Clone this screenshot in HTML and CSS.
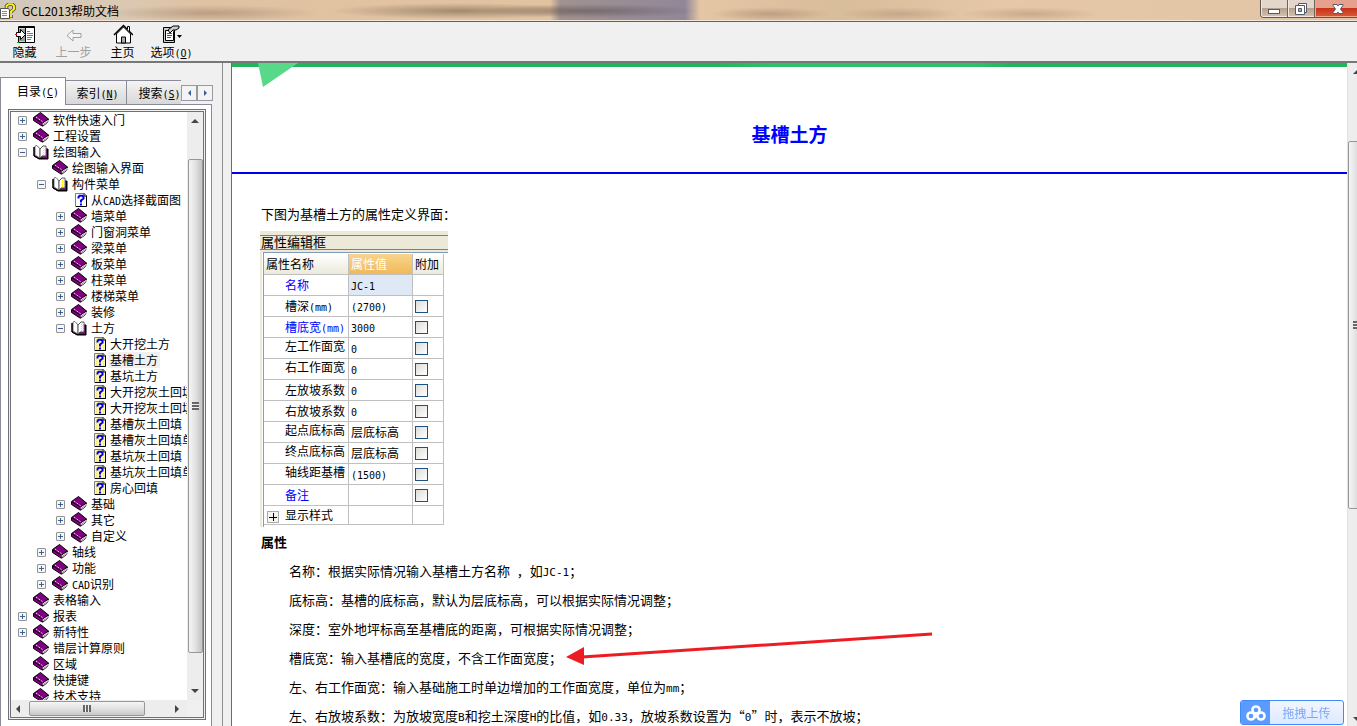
FILE: index.html
```html
<!DOCTYPE html>
<html lang="zh-CN">
<head>
<meta charset="utf-8">
<title>GCL2013帮助文档</title>
<link rel="stylesheet" href="styles.css">
</head>
<body>
<svg class="defs" aria-hidden="true">
  <symbol id="book" viewBox="0 0 16 16">
    <path d="M.500 5.500L7.500 .500l8 6.500-1 2 .5 1-5 4H9L.500 8.500z" fill="#800080" stroke="#000"/>
    <path d="M9.500 11l5.500-3.500-.500 2 .5.500-5 3.500z" fill="#fff"/>
    <path d="M10 12.500l4.500-3" stroke="#999"/>
    <path d="M1 6l8.500 5 6-4" fill="none" stroke="#000"/>
    <path d="M3 5l7 5" stroke="#fff" stroke-dasharray="1 1" fill="none"/>
  </symbol>
  <symbol id="open" viewBox="0 0 16 16">
    <path d="M1 3v9l5 3h9V5h-2" fill="#800080" stroke="#000"/>
    <path d="M2 2v9l5 3V5L4 1.500z" fill="#fff" stroke="#777"/>
    <path d="M7 14V5l3-3h3v10H9z" fill="#fff" stroke="#555"/>
    <path d="M10.500 4v8M12 3v8" stroke="#ffe600" stroke-dasharray="1 1"/>
    <path d="M1 3v9l5 2.500h8.500V5" fill="none" stroke="#000"/>
  </symbol>
  <symbol id="topic" viewBox="-2 0 16 16">
    <path d="M2.500 1.500h9l2 2v11h-11z" fill="#fff8a0" stroke="#808080"/>
    <path d="M4.500 3v11M11.500 5v9" stroke="#ffe600" stroke-dasharray="1 1"/>
    <path d="M13.500 4v10.500H3M11 1.500V4h3" fill="none" stroke="#000"/>
    <path d="M5.500 6.500V5l1-1.200h3L10.500 5v1.500L8 8.500v2M8 11.500v2" fill="none" stroke="#0000e8" stroke-width="2"/>
  </symbol>
  <symbol id="topic-plain" viewBox="-2 0 16 16">
    <path d="M2.500 1.500h9l2 2v11h-11z" fill="#fff" stroke="#808080"/>
    <path d="M13.500 4v10.500H3M11 1.500V4h3" fill="none" stroke="#000"/>
    <path d="M5.500 6.500V5l1-1.200h3L10.500 5v1.500L8 8.500v2M8 11.500v2" fill="none" stroke="#0000e8" stroke-width="2"/>
  </symbol>
</svg>

<header class="titlebar">
  <svg class="app-icon" viewBox="0 0 16 16" aria-hidden="true">
    <path d="M.5 5.500h8l1 2v8h-9z" fill="#fff" stroke="#555"/>
    <path d="M2 8.500h5M2 10.500h5M2 12.500h5" stroke="#888"/>
    <path d="M6.500 5V3l2-1.700h4L14 3v3l-3 2.500V10M11 12v3" fill="none" stroke="#333" stroke-width="3.400"/>
    <path d="M6.500 5V3l2-1.700h4L14 3v3l-3 2.500V10M11 12v2.600" fill="none" stroke="#fff200" stroke-width="2"/>
  </svg>
  <h1 class="app-title">GCL2013帮助文档</h1>
  <div class="window-buttons">
    <button class="win" aria-label="最小化"><svg viewBox="0 0 14 14"><rect x="1.500" y="7.500" width="11" height="4" fill="#fff" stroke="#555a6b"/></svg></button>
    <button class="win" aria-label="还原"><svg viewBox="0 0 14 14"><path d="M4.500 1.500h8v9h-8z" fill="#fff" stroke="#555a6b"/><path d="M1.500 3.500h9v9h-9z" fill="#fff" stroke="#555a6b"/><path d="M4.500 6.500h3v3h-3z" fill="#b8a898" stroke="#555a6b"/></svg></button>
    <button class="win close" aria-label="关闭"><svg viewBox="0 0 14 14"><path d="M2 2.500h4l1 1.500 1-1.500h4v1L9.500 7l2.500 3.500v1H8L7 10l-1 1.500H2v-1L4.500 7 2 3.500z" fill="#fff" stroke="#555a6b"/></svg></button>
  </div>
</header>

<nav class="toolbar" aria-label="工具栏">
  <button class="tool"><svg viewBox="0 0 20 20"><path d="M3.500 2.500h16v16h-16z" fill="#fff" stroke="#000"/><path d="M4 3.500h15" stroke="#000"/><path d="M4 4.500h6v13H4z" fill="#999"/><path d="M10.500 4v14" stroke="#000"/><path d="M12 7.500h3M12 9.500h6M12 11.500h6M12 13.500h5M12 15.500h4" stroke="#777"/><path d="M1.500 8.500h4v-3l5 5-5 5v-3h-4z" fill="#fff" stroke="#000"/><path d="M0 10.500h2" stroke="#f00"/><path d="M2 18.500h2" stroke="#0b0"/></svg><span>隐藏</span></button>
  <button class="tool" disabled><svg viewBox="0 0 20 20"><path d="M3 11.500l6-5.500v3.500h8v4H9V17z" fill="#f4f4f4" stroke="#a0a0a0"/></svg><span>上一步</span></button>
  <button class="tool"><svg viewBox="0 0 20 20"><path d="M3.500 10v9h14v-9l-7-7z" fill="#fff" stroke="#000"/><path d="M1 11l9.500-9.500L20 11" fill="none" stroke="#000" stroke-width="1.500"/><path d="M14.500 5V2.500h2V8" fill="#fff" stroke="#000"/><path d="M8.500 19v-6h4v6z" fill="#aaa" stroke="#000"/></svg><span>主页</span></button>
  <button class="tool"><svg viewBox="0 0 20 20"><path d="M1.500 3.500h11v15h-11z" fill="#ccc" stroke="#000"/><path d="M3.500 6.500h7l1 1v9h-8z" fill="#fff" stroke="#000"/><path d="M5 9.500h5M5 11.500h5M5 13.500h4" stroke="#555"/><path d="M6 6l5-4h6v2l-3 2h-3l-3 3z" fill="#ccc" stroke="#000"/><path d="M15 11h5l-2.500 3z" fill="#000"/></svg><span>选项<span class="lat">(<u>O</u>)</span></span></button>
</nav>

<div class="workspace">
  <aside class="sidebar">
    <div class="tabs" role="tablist">
      <button class="tab active" role="tab" aria-selected="true">目录<span class="lat">(<u>C</u>)</span></button>
      <button class="tab" role="tab">索引<span class="lat">(<u>N</u>)</span></button>
      <button class="tab last" role="tab">搜索<span class="lat">(<u>S</u>)</span></button>
      <button class="tab-nav" aria-label="向左"><i class="tri left"></i></button>
      <button class="tab-nav" aria-label="向右"><i class="tri right"></i></button>
    </div>
    <div class="panel">
      <div class="tree-frame">
        <ul class="tree">
          <li><div class="row"><button class="exp plus" aria-label="展开"></button><svg><use href="#book"/></svg><a href="#">软件快速入门</a></div></li>
          <li><div class="row"><button class="exp plus" aria-label="展开"></button><svg><use href="#book"/></svg><a href="#">工程设置</a></div></li>
          <li><div class="row"><button class="exp" aria-label="折叠"></button><svg><use href="#open"/></svg><a href="#">绘图输入</a></div>
            <ul>
              <li><div class="row"><i class="gap"></i><svg><use href="#book"/></svg><a href="#">绘图输入界面</a></div></li>
              <li><div class="row"><button class="exp" aria-label="折叠"></button><svg><use href="#open"/></svg><a href="#">构件菜单</a></div>
                <ul>
                  <li><div class="row"><i class="gap"></i><svg><use href="#topic-plain"/></svg><a href="#">从<span class="lat">CAD</span>选择截面图</a></div></li>
                  <li><div class="row"><button class="exp plus" aria-label="展开"></button><svg><use href="#book"/></svg><a href="#">墙菜单</a></div></li>
                  <li><div class="row"><button class="exp plus" aria-label="展开"></button><svg><use href="#book"/></svg><a href="#">门窗洞菜单</a></div></li>
                  <li><div class="row"><button class="exp plus" aria-label="展开"></button><svg><use href="#book"/></svg><a href="#">梁菜单</a></div></li>
                  <li><div class="row"><button class="exp plus" aria-label="展开"></button><svg><use href="#book"/></svg><a href="#">板菜单</a></div></li>
                  <li><div class="row"><button class="exp plus" aria-label="展开"></button><svg><use href="#book"/></svg><a href="#">柱菜单</a></div></li>
                  <li><div class="row"><button class="exp plus" aria-label="展开"></button><svg><use href="#book"/></svg><a href="#">楼梯菜单</a></div></li>
                  <li><div class="row"><button class="exp plus" aria-label="展开"></button><svg><use href="#book"/></svg><a href="#">装修</a></div></li>
                  <li><div class="row"><button class="exp" aria-label="折叠"></button><svg><use href="#open"/></svg><a href="#">土方</a></div>
                    <ul>
                      <li><div class="row"><i class="gap"></i><svg><use href="#topic"/></svg><a href="#">大开挖土方</a></div></li>
                      <li><div class="row"><i class="gap"></i><svg><use href="#topic"/></svg><a href="#" class="selected">基槽土方</a></div></li>
                      <li><div class="row"><i class="gap"></i><svg><use href="#topic"/></svg><a href="#">基坑土方</a></div></li>
                      <li><div class="row"><i class="gap"></i><svg><use href="#topic"/></svg><a href="#">大开挖灰土回填</a></div></li>
                      <li><div class="row"><i class="gap"></i><svg><use href="#topic"/></svg><a href="#">大开挖灰土回填单元</a></div></li>
                      <li><div class="row"><i class="gap"></i><svg><use href="#topic"/></svg><a href="#">基槽灰土回填</a></div></li>
                      <li><div class="row"><i class="gap"></i><svg><use href="#topic"/></svg><a href="#">基槽灰土回填单元</a></div></li>
                      <li><div class="row"><i class="gap"></i><svg><use href="#topic"/></svg><a href="#">基坑灰土回填</a></div></li>
                      <li><div class="row"><i class="gap"></i><svg><use href="#topic"/></svg><a href="#">基坑灰土回填单元</a></div></li>
                      <li><div class="row"><i class="gap"></i><svg><use href="#topic"/></svg><a href="#">房心回填</a></div></li>
                    </ul>
                  </li>
                  <li><div class="row"><button class="exp plus" aria-label="展开"></button><svg><use href="#book"/></svg><a href="#">基础</a></div></li>
                  <li><div class="row"><button class="exp plus" aria-label="展开"></button><svg><use href="#book"/></svg><a href="#">其它</a></div></li>
                  <li><div class="row"><button class="exp plus" aria-label="展开"></button><svg><use href="#book"/></svg><a href="#">自定义</a></div></li>
                </ul>
              </li>
              <li><div class="row"><button class="exp plus" aria-label="展开"></button><svg><use href="#book"/></svg><a href="#">轴线</a></div></li>
              <li><div class="row"><button class="exp plus" aria-label="展开"></button><svg><use href="#book"/></svg><a href="#">功能</a></div></li>
              <li><div class="row"><button class="exp plus" aria-label="展开"></button><svg><use href="#book"/></svg><a href="#"><span class="lat">CAD</span>识别</a></div></li>
            </ul>
          </li>
          <li><div class="row"><i class="gap"></i><svg><use href="#book"/></svg><a href="#">表格输入</a></div></li>
          <li><div class="row"><button class="exp plus" aria-label="展开"></button><svg><use href="#book"/></svg><a href="#">报表</a></div></li>
          <li><div class="row"><button class="exp plus" aria-label="展开"></button><svg><use href="#book"/></svg><a href="#">新特性</a></div></li>
          <li><div class="row"><i class="gap"></i><svg><use href="#book"/></svg><a href="#">错层计算原则</a></div></li>
          <li><div class="row"><i class="gap"></i><svg><use href="#book"/></svg><a href="#">区域</a></div></li>
          <li><div class="row"><i class="gap"></i><svg><use href="#book"/></svg><a href="#">快捷键</a></div></li>
          <li><div class="row"><i class="gap"></i><svg><use href="#book"/></svg><a href="#">技术支持</a></div></li>
        </ul>
        <div class="vbar"><i class="tri up"></i><div class="vthumb"><i class="grip"></i></div><i class="tri down"></i></div>
        <div class="hbar"><i class="tri left"></i><div class="hthumb"><i class="grip"></i></div><i class="tri right"></i></div>
      </div>
    </div>
  </aside>

  <main class="page">
    <article class="content">
      <div class="banner"><svg viewBox="0 0 40 24" aria-hidden="true"><path d="M0 0h40L5 24z" fill="#57d989"/></svg></div>
      <h2 class="heading">基槽土方</h2>
      <div class="body">
        <p class="intro">下图为基槽土方的属性定义界面：</p>
        <div class="editor">
          <div class="editor-title">属性编辑框</div>
          <div class="editor-body">
          <table class="props">
            <thead><tr><th class="c-name">属性名称</th><th class="c-value">属性值</th><th class="c-add">附加</th></tr></thead>
            <tbody>
              <tr><td class="blue">名称</td><td class="current"><span class="lat">JC-1</span></td><td></td></tr>
              <tr><td>槽深<span class="lat">(mm)</span></td><td><span class="lat">(2700)</span></td><td><input type="checkbox" aria-label="附加槽深"></td></tr>
              <tr><td class="blue">槽底宽<span class="lat">(mm)</span></td><td><span class="lat">3000</span></td><td><input type="checkbox" aria-label="附加槽底宽"></td></tr>
              <tr><td class="high">左工作面宽</td><td><span class="lat">0</span></td><td><input type="checkbox" aria-label="附加左工作面宽"></td></tr>
              <tr><td class="high">右工作面宽</td><td><span class="lat">0</span></td><td><input type="checkbox" aria-label="附加右工作面宽"></td></tr>
              <tr><td>左放坡系数</td><td><span class="lat">0</span></td><td><input type="checkbox" aria-label="附加左放坡系数"></td></tr>
              <tr><td>右放坡系数</td><td><span class="lat">0</span></td><td><input type="checkbox" aria-label="附加右放坡系数"></td></tr>
              <tr><td class="high">起点底标高</td><td>层底标高</td><td><input type="checkbox" aria-label="附加起点底标高"></td></tr>
              <tr><td class="high">终点底标高</td><td>层底标高</td><td><input type="checkbox" aria-label="附加终点底标高"></td></tr>
              <tr><td class="high">轴线距基槽</td><td><span class="lat">(1500)</span></td><td><input type="checkbox" aria-label="附加轴线距基槽"></td></tr>
              <tr><td class="blue">备注</td><td></td><td><input type="checkbox" aria-label="附加备注"></td></tr>
              <tr class="short"><td class="group"><button class="more" aria-label="展开显示样式"></button>显示样式</td><td></td><td></td></tr>
            </tbody>
          </table>
          </div>
        </div>
        <h3 class="sub">属性</h3>
        <div class="notes">
          <p>名称：根据实际情况输入基槽土方名称<span class="lat"> </span>，如<span class="lat">JC-1</span>；</p>
          <p>底标高：基槽的底标高，默认为层底标高，可以根据实际情况调整；</p>
          <p>深度：室外地坪标高至基槽底的距离，可根据实际情况调整；</p>
          <p class="pointed">槽底宽：输入基槽底的宽度，不含工作面宽度；<svg class="arrow" viewBox="0 0 368 34" aria-hidden="true"><path d="M16 25L366 2" stroke="#ed1c24" stroke-width="3"/><path d="M0 25l18-10v18z" fill="#ed1c24"/></svg></p>
          <p>左、右工作面宽：输入基础施工时单边增加的工作面宽度，单位为<span class="lat">mm</span>；</p>
          <p>左、右放坡系数：为放坡宽度<span class="lat">B</span>和挖土深度<span class="lat">H</span>的比值，如<span class="lat">0.33</span>，放坡系数设置为“<span class="lat">0</span>”时，表示不放坡；</p>
        </div>
      </div>
    </article>
    <div class="pagebar"><i class="tri up"></i><div class="vthumb"><i class="grip"></i></div><i class="tri down"></i></div>
  </main>
</div>

<button class="upload"><span class="upload-logo"><svg viewBox="0 0 20 16" aria-hidden="true"><g fill="none" stroke="#fff" stroke-width="2.500"><circle cx="10" cy="5" r="3.600"/><circle cx="5" cy="11" r="3.600"/><circle cx="15" cy="11" r="3.600"/><path d="M8 13l5-5"/></g></svg></span><span class="upload-text">拖拽上传</span></button>
</body>
</html>
```

FILE: styles.css
```css
* { box-sizing: border-box; }

body {
  margin: 0;
  height: 100vh;
  display: flex;
  flex-direction: column;
  overflow: hidden;
  background: #f0f0f0;
  color: #000;
  font: 12px/16px "Noto Sans CJK SC", sans-serif;
}

button {
  margin: 0;
  padding: 0;
  border: 0;
  background: none;
  color: inherit;
  font: inherit;
}

ul { margin: 0; padding: 0; list-style: none; }
a { color: inherit; text-decoration: none; }
.defs { display: none; }
.lat { font-family: "DejaVu Sans Mono", monospace; font-size: 10px; line-height: 1px; }
.notes .lat { font-size: 11px; }

/* Title bar */
.titlebar {
  flex: none;
  height: 22px;
  display: flex;
  align-items: center;
  gap: 6px;
  border-bottom: 1px solid #6d5c52;
  box-shadow: inset 0 -1px #f3e6da;
  background:
    radial-gradient(ellipse 110px 8px at 210px 13px, #9a806a88, transparent),
    radial-gradient(ellipse 130px 8px at 460px 11px, #5c463677, transparent),
    radial-gradient(ellipse 110px 7px at 590px 11px, #4d404677, transparent),
    radial-gradient(ellipse 60px 7px at 770px 14px, #a0806688, transparent),
    radial-gradient(ellipse 60px 7px at 900px 14px, #a0806666, transparent),
    radial-gradient(ellipse 70px 7px at 1030px 14px, #a0806666, transparent),
    linear-gradient(90deg, #cfc8bd 0, #dbc9b4 120px, #dfc2a2 200px, #e2c3a1 550px, #a09290 560px, #918799 685px, #e4c6a5 700px, #d8bd9b 840px, #e5c8a7 1000px, #e2c5a5);
}
.app-icon { flex: none; width: 16px; height: 16px; }
.app-title { flex: 1; margin: 0; font-size: 12px; font-weight: 400; }
.window-buttons {
  align-self: flex-start;
  display: flex;
  height: 18px;
  border: solid #5f5650;
  border-width: 0 0 1px 1px;
  border-radius: 0 0 0 4px;
  overflow: hidden;
}
.win {
  width: 27px;
  border-right: 1px solid #6f635b;
  background: linear-gradient(#e3d6ca 0 45%, #b5a08e 50%, #d4c4b4);
  box-shadow: inset 1px -1px #f2e9e0;
}
.win svg { display: block; width: 14px; height: 14px; margin: 0 auto; }
.close {
  width: 42px;
  padding-left: 4px;
  border: 0;
  background: linear-gradient(#e5a18d 0 45%, #c6351b 50%, #dd5a36);
  box-shadow: inset 1px -1px #f0a58c;
}

/* Toolbar */
.toolbar {
  flex: none;
  display: flex;
  height: 41px;
  padding-top: 2px;
  border-bottom: 2px solid #777;
}
.tool {
  width: 49px;
  display: flex;
  flex-direction: column;
  align-items: center;
  white-space: nowrap;
}
.tool svg { width: 20px; height: 20px; }
.tool:disabled { color: #a0a0a0; }

/* Split workspace */
.workspace { flex: 1; min-height: 0; display: flex; }
.sidebar {
  flex: none;
  width: 223px;
  display: flex;
  flex-direction: column;
  padding: 14px 10px 0 0;
  border-right: 1px solid #909090;
}
.tabs { flex: none; display: flex; align-items: flex-end; height: 27px; }
.tab {
  flex: none;
  height: 24px;
  width: 61px;
  padding-left: 3px;
  border: solid #8a8a98;
  border-width: 1px 1px 0 0;
  background: linear-gradient(#f4f4f4, #d8d8d8);
  white-space: nowrap;
}
.active {
  position: relative;
  z-index: 1;
  width: 66px;
  height: 28px;
  margin-bottom: -1px;
  padding: 0 0 2px 10px;
  border-left-width: 1px;
  background: #fff;
}
.last { width: 54px; padding-left: 11px; border-right: 0; overflow: hidden; }
.tab-nav {
  flex: none;
  width: 16px;
  height: 16px;
  margin-bottom: 3px;
  border: 1px solid #9a9aa4;
  background: #f3f3f3;
  display: grid;
  place-items: center;
  color: #3b5c9a;
}
.panel {
  flex: 1;
  min-height: 0;
  padding: 4px 5px 6px 7px;
  border: solid #8a8a98;
  border-width: 1px 1px 0 1px;
  background: #fff;
}
.tree-frame {
  height: 100%;
  display: grid;
  grid-template: minmax(0, 1fr) 17px / minmax(0, 1fr) 16px;
  border: 3px double #707078;
  background: #f0f0f0;
}
.tree { overflow: hidden; background: #fff; }
.tree ul { padding-left: 19px; }
.row { display: flex; align-items: center; height: 16px; padding-left: 7px; white-space: nowrap; }
.row svg { flex: none; width: 16px; height: 16px; margin: 0 2px 0 6px; }
.row a { padding: 0 2px; }
.selected { background: #f0f0f0; }
.gap { flex: none; width: 9px; }
.exp {
  flex: none;
  width: 9px;
  height: 9px;
  border: 1px solid #919191;
  border-radius: 1px;
  background: linear-gradient(#3a5f9e, #3a5f9e) center / 5px 1px no-repeat, #f6f6f6;
}
.plus {
  background:
    linear-gradient(#3a5f9e, #3a5f9e) center / 5px 1px no-repeat,
    linear-gradient(#3a5f9e, #3a5f9e) center / 1px 5px no-repeat, #f6f6f6;
}

/* Scroll bars */
.tri { flex: none; width: 0; height: 0; border: 4px solid transparent; }
.tri.up { border-width: 0 4px 4px; border-bottom-color: #444; }
.tri.down { border-width: 4px 4px 0; border-top-color: #444; }
.tri.left { border-width: 4px 4px 4px 0; border-right-color: #444; }
.tri.right { border-width: 4px 0 4px 4px; border-left-color: #444; }
.tab-nav .left { border-width: 3px 3px 3px 0; border-right-color: #3b5c9a; }
.tab-nav .right { border-width: 3px 0 3px 3px; border-left-color: #3b5c9a; }
.vbar { display: flex; flex-direction: column; align-items: center; justify-content: space-between; padding: 7px 0; background: #ededed; }
.vthumb {
  width: 15px;
  height: 86%;
  display: grid;
  place-items: center;
  border: 1px solid #979797;
  border-radius: 2px;
  background: linear-gradient(90deg, #f5f5f5, #e4e4e4 45%, #c3c3c8);
}
.vbar .vthumb { margin-top: 16px; margin-bottom: 16px; }
.vthumb .grip { width: 7px; height: 8px; background: repeating-linear-gradient(#666 0 2px, #eee 2px 3px); }
.hbar { display: flex; align-items: center; padding: 0 5px; background: #ededed; }
.hthumb {
  width: 116px;
  height: 15px;
  margin: 0 30px 0 9px;
  display: grid;
  place-items: center;
  border: 1px solid #979797;
  border-radius: 2px;
  background: linear-gradient(#f5f5f5, #e4e4e4 45%, #c8c8cc);
}
.hthumb .grip { width: 8px; height: 7px; background: repeating-linear-gradient(90deg, #666 0 2px, #eee 2px 3px); }

/* Topic page */
.page { flex: 1; min-width: 0; display: flex; margin-left: 8px; border-left: 1px solid #6b6b6b; background: #fff; }
.content { flex: 1; min-width: 0; overflow: hidden; }
.banner { height: 4px; padding-left: 26px; background: linear-gradient(90deg, #23b45b 0 43%, #2dc068 48% 67%, #23b45b 70%); }
.banner svg { display: block; width: 40px; height: 24px; }
.heading {
  margin: 0;
  padding: 53px 0 24px;
  border-bottom: 2px solid #0000e8;
  color: #00f;
  font-size: 19px;
  line-height: 28px;
  text-align: center;
}
.body { padding: 25px 0 0 29px; font-size: 13px; line-height: 29px; white-space: nowrap; }
.intro { margin: 0; }
.sub { margin: 0; font-size: 13px; line-height: 29px; }
.notes { padding-left: 28px; }
.notes p { margin: 0; }
.pointed { position: relative; }
.arrow { position: absolute; left: 277px; top: -11px; width: 368px; height: 34px; }

/* Property editor */
.editor { width: 188px; margin: 3px 0 0 -1px; font-size: 12px; line-height: 16px; background: linear-gradient(90deg, #ece9d8 2px, #fff 2px); }
.editor-title { height: 21px; padding: 4px 0 0 1px; background: linear-gradient(#808080, #808080) 0 4px / 100% 1px no-repeat, linear-gradient(#808080, #808080) 0 18px / 100% 1px no-repeat, #ece9d8; font-size: 13px; line-height: 14px; }
.editor-body { margin-left: 3px; padding: 1px 0 2px; border: solid #7f9db9; border-width: 1px 0 0 1px; }
.props { table-layout: fixed; width: 180px; border-collapse: separate; border-spacing: 0; }
.props th, .props td { height: 21px; padding: 0 0 0 2px; border: solid #c0c0c0; border-width: 0 1px 1px 0; font-weight: 400; text-align: left; line-height: 16px; }
.props td:first-child { padding-left: 21px; }
.props th { background: linear-gradient(#fff, #ebeadb); }
.c-name { width: 85px; }
.c-value { width: 64px; }
.props .c-value { background: linear-gradient(#f9d48b, #f0b95a); color: #fff; }
.blue { color: #00f; }
.current { background: #dfe9f6; }
.props .high { vertical-align: top; }
.props .short td { height: 19px; }
.props input { display: block; appearance: none; width: 13px; height: 13px; margin: 0; border: 1px solid #1c5180; background: linear-gradient(135deg, #dcdcd7, #fff); }
.props .short .group { padding-left: 3px; }
.more { width: 12px; height: 12px; margin-right: 6px; border: 1px solid #aaa; vertical-align: -2px; background: linear-gradient(#000, #000) center / 8px 1px no-repeat, linear-gradient(#000, #000) center / 1px 8px no-repeat, #f4f4f0; }

.pagebar { flex: none; width: 10px; display: flex; flex-direction: column; justify-content: space-between; padding: 7px 0 5px; overflow: hidden; background: #ededed; border-left: 1px solid #e2e2e2; }
.pagebar .tri { margin-left: 5px; }
.pagebar .vthumb { flex: none; width: 16px; height: 368px; margin-bottom: 142px; }

/* Floating upload button */
.upload { position: fixed; right: 13px; bottom: 1px; display: flex; width: 104px; height: 25px; border: 1px solid #3d8bfd; border-radius: 3px; overflow: hidden; background: linear-gradient(#f2f6ff, #dde9ff); color: #7ba7f7; }
.upload-logo { flex: none; width: 29px; height: 100%; display: grid; place-items: center; background: #5b9bff; }
.upload-logo svg { width: 20px; height: 16px; }
.upload-text { flex: 1; line-height: 23px; text-align: center; }
```
